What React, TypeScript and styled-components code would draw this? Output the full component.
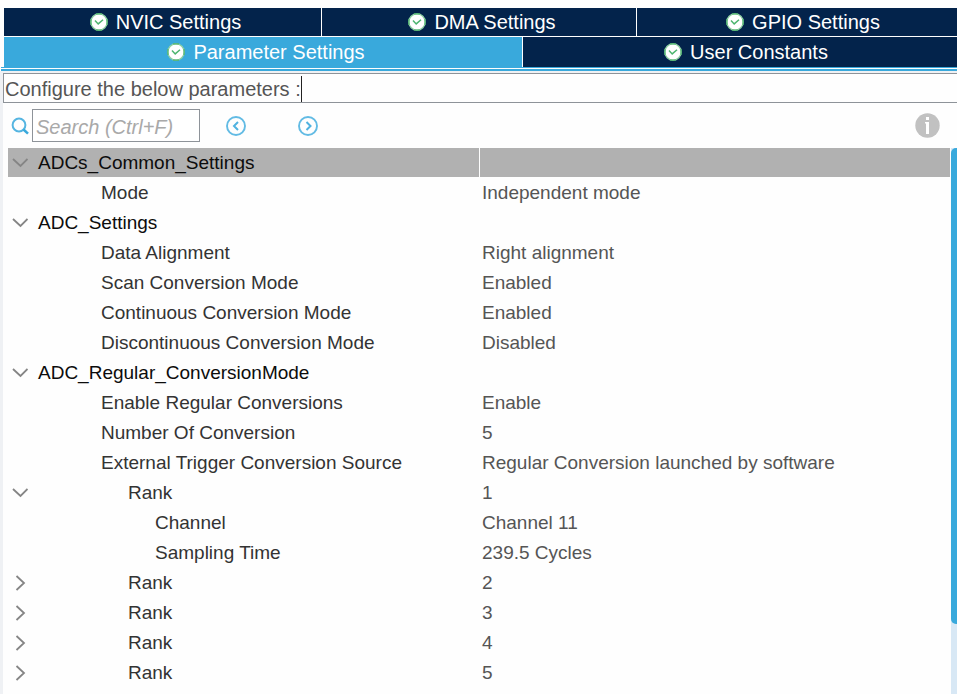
import React, { useState } from "react";
import styled, { createGlobalStyle } from "styled-components";

const GlobalStyle = createGlobalStyle`
  * { box-sizing: border-box; }
  body {
    margin: 0;
    background: #fefefe;
    font-family: "Liberation Sans", Arial, sans-serif;
    font-size: 20px;
    color: #333333;
  }
  button, input { font: inherit; }
`;

const Page = styled.main`
  display: flex;
  flex-direction: column;
  min-height: 100vh;
  padding-top: 8px;
`;

const TabBar = styled.nav`
  display: flex;
  flex-direction: column;
  gap: 1px;
  padding-left: 4px;
`;

const TabRow = styled.div<{ $columns: string }>`
  display: grid;
  grid-template-columns: ${(p) => p.$columns};
  gap: 1px;
`;

const Tab = styled.button<{ $active?: boolean; $tall?: boolean }>`
  display: flex;
  align-items: center;
  justify-content: center;
  gap: 8px;
  height: ${(p) => (p.$tall ? 30 : 28)}px;
  padding: 0 0 0 6px;
  border: 0;
  background: ${(p) => (p.$active ? "#39a9dc" : "#03234b")};
  color: #ffffff;
  line-height: 28px;
  white-space: nowrap;
  cursor: pointer;
  &:last-child {
    padding-left: 12px;
  }
`;

const TabRule = styled.div`
  height: 4px;
  margin-left: 1px;
  border-top: 1px solid #39a9dc;
  border-bottom: 2px solid #39a9dc;
`;

const Panel = styled.section`
  flex: 1;
  display: flex;
  flex-direction: column;
  border-left: 3px solid #eff1f4;
`;

const Caption = styled.div`
  display: flex;
  align-items: center;
  height: 32px;
  border-top: 2px solid #eff1f4;
`;

const CaptionBox = styled.div`
  flex: 1;
  display: flex;
  align-items: center;
  height: 30px;
  padding: 2px 0 0 1px;
  border: 1px solid #8e9399;
  border-right: 0;
  color: #555555;
`;

const Caret = styled.span`
  width: 1px;
  height: 26px;
  background: #222222;
`;

const Toolbar = styled.div`
  display: flex;
  align-items: center;
  height: 45px;
  padding: 0 17px 0 8px;
`;

const SearchLabel = styled.label`
  display: flex;
  align-items: center;
  gap: 3px;
`;

const SearchInput = styled.input`
  width: 168px;
  height: 33px;
  padding: 3px 3px 0;
  border: 1px solid #8e9399;
  background: #ffffff;
  color: #333333;
  outline: 0;
  &::placeholder {
    color: #a9a9a9;
    font-style: italic;
    opacity: 1;
  }
`;

const IconButton = styled.button<{ $gap?: number; $end?: boolean }>`
  display: flex;
  padding: 0;
  border: 0;
  background: none;
  margin-left: ${(p) => (p.$end ? "auto" : `${p.$gap ?? 0}px`)};
  cursor: pointer;
`;

const Content = styled.div`
  flex: 1;
  display: flex;
  gap: 1px;
  padding-left: 5px;
`;

const TreeArea = styled.div`
  flex: 1;
`;

const Tree = styled.table`
  width: 100%;
  table-layout: fixed;
  border-collapse: separate;
  border-spacing: 0;
  font-size: 19px;
`;

const Row = styled.tr<{ $selected?: boolean }>`
  height: 30px;
  & > * {
    background: ${(p) => (p.$selected ? "#b1b1b1" : "transparent")};
    border-bottom: 1px solid #fefefe;
  }
  & > td {
    border-left: 1px solid #fefefe;
  }
`;

const NameCell = styled.th<{ $group?: boolean }>`
  padding: 1px 0 0;
  font-weight: 400;
  text-align: left;
  color: ${(p) => (p.$group ? "#0c0c0c" : "#333333")};
`;

const indents = { group: 10, item: 73, rank: 100, detail: 127 };
type Level = keyof typeof indents;

const NameLine = styled.div<{ $level: Level }>`
  display: grid;
  grid-template-columns: 20px 1fr;
  column-gap: ${(p) => indents[p.$level]}px;
  align-items: center;
  line-height: 28px;
  white-space: nowrap;
`;

const ToggleButton = styled.button`
  display: flex;
  padding: 0 0 0 4px;
  border: 0;
  background: none;
  cursor: pointer;
`;

const ValueCell = styled.td`
  padding: 1px 0 0 2px;
  line-height: 28px;
  color: #555555;
  white-space: nowrap;
`;

const ScrollTrack = styled.div`
  width: 6px;
  background: #d8e8f5;
`;

const ScrollThumb = styled.div`
  height: 476px;
  border-radius: 5px 0 0 5px;
  background: #39a9dc;
`;

const CheckIcon = () => (
  <svg width="18" height="18" viewBox="0 0 18 18" aria-hidden="true">
    <circle cx="9" cy="9" r="8.2" fill="#ffffff" stroke="#8fd0a3" strokeWidth="1.4" />
    <path d="M6 0.9 H12 M6 17.1 H12 M0.9 6 V12 M17.1 6 V12" stroke="#4fb36f" strokeWidth="1.2" />
    <path d="M5 7.6 L8.2 10.9 L13 6.8" fill="none" stroke="#4db56f" strokeWidth="1.5" />
  </svg>
);

const SearchIcon = () => (
  <svg width="18" height="18" viewBox="0 0 18 18" aria-hidden="true">
    <circle cx="8" cy="8" r="6.4" fill="none" stroke="#55b5e1" strokeWidth="2" />
    <path d="M12.5 12.5 L17 16.6" stroke="#39a9dc" strokeWidth="2.6" />
  </svg>
);

const CircleArrow = ({ back }: { back?: boolean }) => (
  <svg width="20" height="20" viewBox="0 0 20 20" aria-hidden="true">
    <circle cx="10" cy="10" r="9" fill="none" stroke="#62bbe4" strokeWidth="1.9" />
    <path
      d={back ? "M12 6 L8 10 L12 14" : "M8.5 6 L12.5 10 L8.5 14"}
      fill="none"
      stroke="#4fb2e0"
      strokeWidth="2"
    />
  </svg>
);

const InfoIcon = () => (
  <svg width="25" height="25" viewBox="0 0 25 25" aria-hidden="true">
    <circle cx="12.5" cy="12.5" r="12.2" fill="#c1c1c1" />
    <rect x="11" y="4" width="3" height="3" fill="#ffffff" />
    <path d="M10 9 H14 V21 H11 V10.5 H10 Z" fill="#ffffff" />
  </svg>
);

const Chevron = ({ open }: { open: boolean }) => (
  <svg width="16" height="16" viewBox="0 0 16 16" aria-hidden="true">
    <path
      d={open ? "M1 4 L8.5 11 L15.5 4" : "M4.5 1 L12 8 L4.5 15"}
      fill="none"
      stroke="#858585"
      strokeWidth="1.8"
    />
  </svg>
);

interface Entry {
  name: string;
  value?: string;
  level: Level;
  open?: boolean;
}

const entries: Entry[] = [
  { name: "ADCs_Common_Settings", level: "group", open: true },
  { name: "Mode", value: "Independent mode", level: "item" },
  { name: "ADC_Settings", level: "group", open: true },
  { name: "Data Alignment", value: "Right alignment", level: "item" },
  { name: "Scan Conversion Mode", value: "Enabled", level: "item" },
  { name: "Continuous Conversion Mode", value: "Enabled", level: "item" },
  { name: "Discontinuous Conversion Mode", value: "Disabled", level: "item" },
  { name: "ADC_Regular_ConversionMode", level: "group", open: true },
  { name: "Enable Regular Conversions", value: "Enable", level: "item" },
  { name: "Number Of Conversion", value: "5", level: "item" },
  { name: "External Trigger Conversion Source", value: "Regular Conversion launched by software", level: "item" },
  { name: "Rank", value: "1", level: "rank", open: true },
  { name: "Channel", value: "Channel 11", level: "detail" },
  { name: "Sampling Time", value: "239.5 Cycles", level: "detail" },
  { name: "Rank", value: "2", level: "rank", open: false },
  { name: "Rank", value: "3", level: "rank", open: false },
  { name: "Rank", value: "4", level: "rank", open: false },
  { name: "Rank", value: "5", level: "rank", open: false },
];

export default function App() {
  const [selected, setSelected] = useState(0);
  return (
    <>
      <GlobalStyle />
      <Page>
        <TabBar>
          <TabRow $columns="317fr 314fr 320fr">
            <Tab><CheckIcon />NVIC Settings</Tab>
            <Tab><CheckIcon />DMA Settings</Tab>
            <Tab><CheckIcon />GPIO Settings</Tab>
          </TabRow>
          <TabRow $columns="518fr 434fr">
            <Tab $active $tall><CheckIcon />Parameter Settings</Tab>
            <Tab $tall><CheckIcon />User Constants</Tab>
          </TabRow>
        </TabBar>
        <TabRule />
        <Panel>
          <Caption>
            <CaptionBox>Configure the below parameters :<Caret /></CaptionBox>
          </Caption>
          <Toolbar>
            <SearchLabel>
              <SearchIcon />
              <SearchInput type="text" placeholder="Search (Ctrl+F)" aria-label="Search" />
            </SearchLabel>
            <IconButton $gap={26} aria-label="Previous match"><CircleArrow back /></IconButton>
            <IconButton $gap={52} aria-label="Next match"><CircleArrow /></IconButton>
            <IconButton $end aria-label="Information"><InfoIcon /></IconButton>
          </Toolbar>
          <Content>
            <TreeArea>
              <Tree>
                <tbody>
                  {entries.map((entry, i) => (
                    <Row key={i} $selected={i === selected} onClick={() => setSelected(i)}>
                      <NameCell scope="row" $group={entry.level === "group"}>
                        <NameLine $level={entry.level}>
                          {entry.open === undefined ? (
                            <span />
                          ) : (
                            <ToggleButton aria-label={entry.name} aria-expanded={entry.open}>
                              <Chevron open={entry.open} />
                            </ToggleButton>
                          )}
                          <span>{entry.name}</span>
                        </NameLine>
                      </NameCell>
                      <ValueCell>{entry.value}</ValueCell>
                    </Row>
                  ))}
                </tbody>
              </Tree>
            </TreeArea>
            <ScrollTrack><ScrollThumb /></ScrollTrack>
          </Content>
        </Panel>
      </Page>
    </>
  );
}
